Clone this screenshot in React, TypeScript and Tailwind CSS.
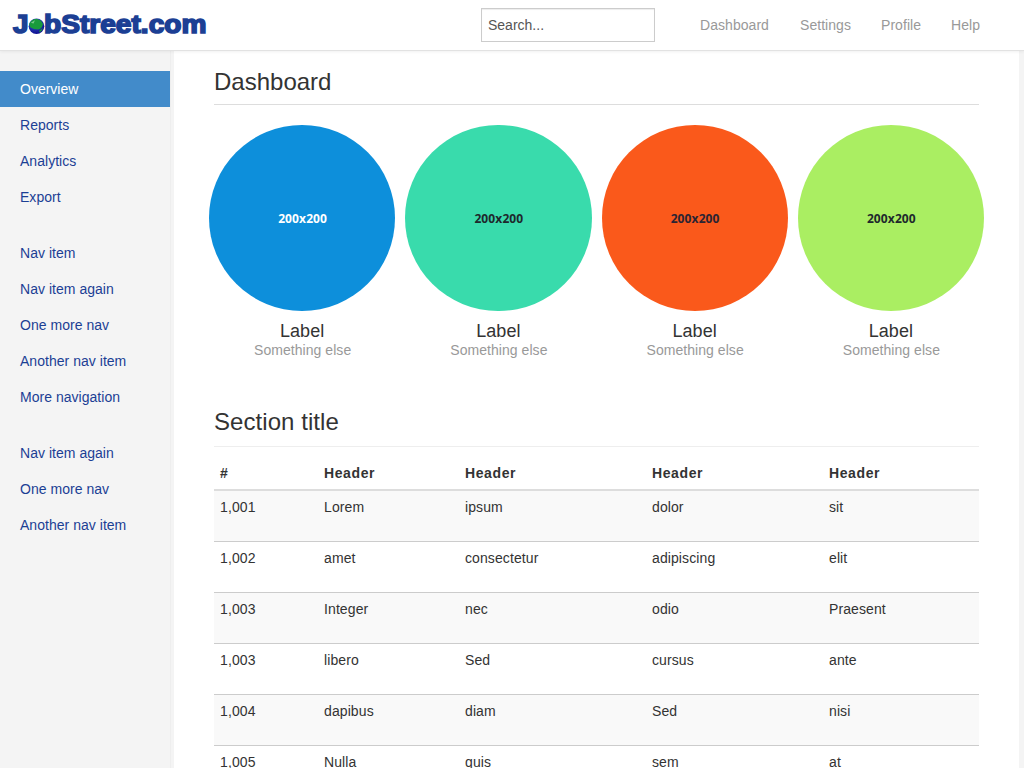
const links = [
  { name: "Dashboard", width: "w-[70px]" },
  { name: "Settings", width: "w-[51px]" },
  { name: "Profile", width: "w-[40px]" },
  { name: "Help", width: "w-[28px]" },
];

const navGroups = [
  ["Overview", "Reports", "Analytics", "Export"],
  ["Nav item", "Nav item again", "One more nav", "Another nav item", "More navigation"],
  ["Nav item again", "One more nav", "Another nav item"],
];

const circles = [
  { fill: "bg-[#0d8fdb]", text: "text-white" },
  { fill: "bg-[#39dbac]", text: "text-[#1e292c]" },
  { fill: "bg-[#fa591b]", text: "text-[#2b2433]" },
  { fill: "bg-[#aaee62]", text: "text-[#1e292c]" },
];

const rows = [
  ["1,001", "Lorem", "ipsum", "dolor", "sit"],
  ["1,002", "amet", "consectetur", "adipiscing", "elit"],
  ["1,003", "Integer", "nec", "odio", "Praesent"],
  ["1,003", "libero", "Sed", "cursus", "ante"],
  ["1,004", "dapibus", "diam", "Sed", "nisi"],
  ["1,005", "Nulla", "quis", "sem", "at"],
];

const columns = "grid grid-cols-[104px_141px_187px_177px_156px]";

function Logo() {
  return (
    <svg width="200" height="30" viewBox="0 0 200 30" className="block" aria-label="JobStreet.com">
      <defs>
        <radialGradient id="globe" cx="0.4" cy="0.3" r="0.75">
          <stop offset="0" stopColor="#3a5bd0" />
          <stop offset="1" stopColor="#0a0a8c" />
        </radialGradient>
      </defs>
      <g fill="#1c3f94" stroke="#1c3f94" strokeWidth="1.6" fontFamily="'Liberation Sans', Arial, sans-serif" fontWeight="700" fontSize="25.5">
        <text x="2.9" y="23.3" textLength="15.5" lengthAdjust="spacingAndGlyphs">J</text>
        <text x="34" y="23.3" textLength="162.5" lengthAdjust="spacingAndGlyphs">bStreet.com</text>
      </g>
      <circle cx="26.5" cy="16.2" r="7.8" fill="url(#globe)" />
      <path d="M19.2 14.5C20 10.5 24 8.6 27.5 9L31 10.8L33 14L32 17L30 19L28 19.5L24 19L20.5 17.5Z" fill="#189a3c" />
      <path d="M29.5 20.5L32.8 18L31.5 21L29 22.5Z" fill="#189a3c" />
      <path d="M20.8 12.8L25 10.2L23.5 13.4Z" fill="#79c98a" />
    </svg>
  );
}

export default function App() {
  return (
    <div className="flex h-[768px] w-[1024px] flex-col overflow-hidden bg-[#f4f4f4] font-['Liberation_Sans',Arial,sans-serif] text-sm leading-5 text-[#333]">
      <header className="z-10 flex h-[51px] shrink-0 items-center border-b border-[#e2e2e2] bg-white pl-[10px] pr-[45px] shadow-[0_1px_3px_rgba(0,0,0,0.06)]">
        <Logo />
        <input
          placeholder="Search..."
          className="ml-auto mr-[45px] h-[34px] w-[174px] border border-[#ccc] bg-white pr-1.5 pl-[6px] text-sm shadow-[inset_0_1px_1px_rgba(0,0,0,0.075)] outline-none placeholder:text-[#555]"
        />
        <nav className="flex gap-[30px] tracking-[0.05px] text-[#999]">
          {links.map((l) => (
            <a key={l.name} className={l.width}>{l.name}</a>
          ))}
        </nav>
      </header>
      <div className="flex min-h-0 flex-1">
        <aside className="flex w-[171px] shrink-0 flex-col gap-5 border-r border-[#eee] pt-5">
          {navGroups.map((group, g) => (
            <ul key={g}>
              {group.map((item) => (
                <li key={item} className={item === "Overview" ? "bg-[#428bca] px-5 py-2 text-white" : "px-5 py-2 tracking-[0.03px] text-[#1c3f94]"}>
                  {item}
                </li>
              ))}
            </ul>
          ))}
        </aside>
        <main className="ml-[3px] w-[845px] shrink-0 overflow-hidden bg-white px-10">
          <h1 className="h-[54px] border-b border-[#ddd] pt-[18px] text-2xl leading-[26px]">Dashboard</h1>
          <section className="-mx-[10px] grid grid-cols-4 pt-5">
            {circles.map((c, i) => (
              <div key={i} className="flex flex-col items-center px-[5px]">
                <div className={`flex aspect-square w-full items-center justify-center rounded-full pt-0.5 pl-px font-['Open_Sans',sans-serif] text-xs font-bold tracking-[0.12px] ${c.fill} ${c.text}`}>
                  200x200
                </div>
                <h4 className="mt-[10px] text-lg leading-5">Label</h4>
                <span className="-mt-px pl-px leading-5 tracking-[0.05px] text-[#999]">Something else</span>
              </div>
            ))}
          </section>
          <h2 className="mt-[49px] h-[38px] border-b border-[#eee] text-2xl leading-[26px] tracking-[0.06px]">Section title</h2>
          <div className="pt-[10px]">
            <div className={`${columns} border-b-2 border-[#ddd] font-bold tracking-[0.6px]`}>
              {["#", "Header", "Header", "Header", "Header"].map((h, i) => (
                <div key={i} className="p-1.5">{h}</div>
              ))}
            </div>
            {rows.map((r) => (
              <div key={r[1]} className={`${columns} h-[51px] border-t border-[#ccc] tracking-[0.1px] odd:bg-white even:bg-[#f9f9f9] nth-2:h-[50px] nth-2:border-t-0`}>
                {r.map((cell, i) => (
                  <div key={i} className="p-1.5">{cell}</div>
                ))}
              </div>
            ))}
          </div>
        </main>
      </div>
    </div>
  );
}
